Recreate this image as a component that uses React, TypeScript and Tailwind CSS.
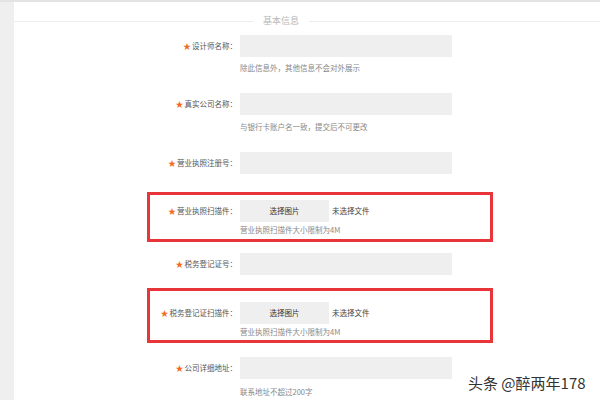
import React from "react";

const font = { fontFamily: '"Noto Sans CJK SC", "Noto Sans", sans-serif' };

function Label({ text }: { text: string }) {
  return (
    <div className="w-[90px] h-[22px] flex items-center justify-end pr-[3px] text-[7.5px] text-[#555] whitespace-nowrap">
      <span className="text-[#f26b1d] text-[8px] mr-[1px]">★</span>
      <span>{text}</span>
    </div>
  );
}

function Hint({ text, mt }: { text: string; mt: string }) {
  return <div className={`${mt} h-[11px] leading-[11px] text-[7.5px] text-[#888] whitespace-nowrap`}>{text}</div>;
}

function InputRow({ label, hint, mt, hintMt }: { label: string; hint?: string; mt: string; hintMt?: string }) {
  return (
    <div className={`${mt} w-[346px] border-[3px] border-transparent flex`}>
      <Label text={label} />
      <div className="flex flex-col">
        <div className="w-[212px] h-[22px] bg-[#efefef]" />
        {hint && <Hint text={hint} mt={hintMt || "mt-[5px]"} />}
      </div>
    </div>
  );
}

function FileRow({ label, mt, pt, pb }: { label: string; mt: string; pt: string; pb: string }) {
  return (
    <div className={`${mt} ${pt} ${pb} w-[346px] border-[3px] border-[#e8353a] flex`}>
      <Label text={label} />
      <div className="flex flex-col">
        <div className="flex items-center h-[22px]">
          <div className="w-[89px] h-[22px] bg-[#efefef] flex items-center justify-center text-[7.5px] text-[#333]">选择图片</div>
          <span className="ml-[3px] text-[7.5px] text-[#444]">未选择文件</span>
        </div>
        <Hint text="营业执照扫描件大小限制为4M" mt="mt-[2px]" />
      </div>
    </div>
  );
}

export default function App() {
  return (
    <div className="relative w-[600px] h-[400px] overflow-hidden bg-white border-t-2 border-[#e3e3e3] flex" style={font}>
      <div className="w-[14px] h-full bg-[#efefef]" />
      <div className="flex-1 flex flex-col">
        <div className="mt-[8px] h-[22px] flex items-center">
          <div className="w-[239px] h-[1px] bg-[#ececec]" />
          <div className="px-[10px] text-[9px] text-[#b8b8b8]">基本信息</div>
          <div className="flex-1 h-[1px] bg-[#ececec]" />
        </div>
        <div className="ml-[133px] flex flex-col">
          <InputRow label="设计师名称：" hint="除此信息外，其他信息不会对外展示" mt="mt-0" />
          <InputRow label="真实公司名称：" hint="与银行卡账户名一致，提交后不可更改" mt="mt-[14px]" hintMt="mt-[6px]" />
          <InputRow label="营业执照注册号：" mt="mt-[14px]" />
          <FileRow label="营业执照扫描件：" mt="mt-[15px]" pt="pt-[5px]" pb="pb-[4px]" />
          <InputRow label="税务登记证号：" mt="mt-[8px]" />
          <FileRow label="税务登记证扫描件：" mt="mt-[10px]" pt="pt-[11px]" pb="pb-[3px]" />
          <InputRow label="公司详细地址：" hint="联系地址不超过200字" mt="mt-[11px]" hintMt="mt-[7px]" />
        </div>
      </div>
      <div className="absolute left-[468px] top-[371px] text-[15px] leading-[20px] text-[#333] whitespace-nowrap">头条 @醉两年178</div>
    </div>
  );
}
